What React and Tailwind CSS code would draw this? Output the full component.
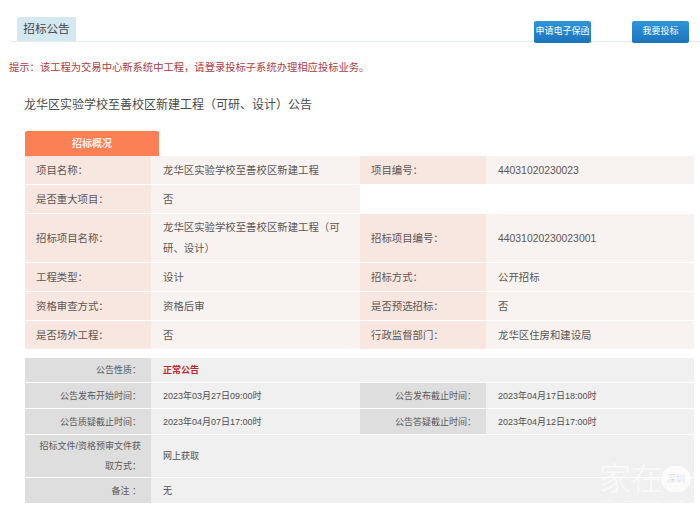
import React from 'react';

const font = { fontFamily: '"Liberation Sans", "Noto Sans CJK SC", sans-serif' };

function PinkLabel({ children, className = '' }) {
  return <div className={`flex items-center bg-[#f8e6e1] pl-[11px] text-[10.4px] leading-[21px] text-[#5c5653] ${className}`}>{children}</div>;
}

function PinkValue({ children, className = '' }) {
  return <div className={`flex items-center bg-[#f8f3f1] pl-3 pr-4 text-[10.4px] leading-[21px] text-[#5c5653] ${className}`}>{children}</div>;
}

function GreyLabel({ children }) {
  return <div className="flex items-center justify-end bg-[#dedede] pl-3 pr-[10px] text-right text-[9px] leading-[20px] text-[#595959]">{children}</div>;
}

function GreyValue({ children, className = '' }) {
  return <div className={`flex items-center bg-[#f0f0f0] pl-3 text-[9px] leading-[20px] text-[#4f4f4f] ${className}`}>{children}</div>;
}

function Button({ children }) {
  return (
    <div className="flex h-[22px] w-[57px] items-center justify-center rounded-[2px] bg-gradient-to-b from-[#2e95d9] to-[#1b74bd] text-[9px] text-white">
      {children}
    </div>
  );
}

export default function App() {
  return (
    <div className="relative h-[512px] w-[700px] overflow-hidden bg-white" style={font}>
      <div className="ml-[10px] flex h-[42px] items-end justify-between border-b border-[#e6edf1] pr-[11px]">
        <div className="ml-[7px] flex h-[24px] w-[59px] items-center justify-center rounded-t-[2px] bg-[#d4e8f2] text-[11.6px] text-[#444]">
          招标公告
        </div>
        <div className="mb-[-2px] flex gap-[41px]">
          <Button>申请电子保函</Button>
          <Button>我要投标</Button>
        </div>
      </div>

      <div className="mt-[20px] pl-[9px] text-[10.3px] leading-[12px] text-[#b03a42]">
        提示：该工程为交易中心新系统中工程，请登录投标子系统办理相应投标业务。
      </div>

      <div className="mt-[21px] pl-[24px] text-[12px] leading-[20px] text-[#4a4a4a]">
        龙华区实验学校至善校区新建工程（可研、设计）公告
      </div>

      <div className="mt-[16px] pl-[25px]">
        <div className="flex h-[25px] w-[134px] items-center justify-center rounded-t-[2px] bg-[#fb7f55] text-[10px] font-bold text-[#fdf0ea]">
          招标概况
        </div>

        <div className="grid w-[669px] grid-cols-[126px_209px_126px_208px] grid-rows-[28px_28px_48px_28px_28px_28px] gap-y-px">
          <PinkLabel>项目名称：</PinkLabel>
          <PinkValue>龙华区实验学校至善校区新建工程</PinkValue>
          <PinkLabel>项目编号：</PinkLabel>
          <PinkValue>44031020230023</PinkValue>

          <PinkLabel>是否重大项目：</PinkLabel>
          <PinkValue>否</PinkValue>
          <div className="col-span-2 bg-white" />

          <PinkLabel>招标项目名称：</PinkLabel>
          <PinkValue>龙华区实验学校至善校区新建工程（可研、设计）</PinkValue>
          <PinkLabel>招标项目编号：</PinkLabel>
          <PinkValue>44031020230023001</PinkValue>

          <PinkLabel>工程类型：</PinkLabel>
          <PinkValue>设计</PinkValue>
          <PinkLabel>招标方式：</PinkLabel>
          <PinkValue>公开招标</PinkValue>

          <PinkLabel>资格审查方式：</PinkLabel>
          <PinkValue>资格后审</PinkValue>
          <PinkLabel>是否预选招标：</PinkLabel>
          <PinkValue>否</PinkValue>

          <PinkLabel>是否场外工程：</PinkLabel>
          <PinkValue>否</PinkValue>
          <PinkLabel>行政监督部门：</PinkLabel>
          <PinkValue>龙华区住房和建设局</PinkValue>
        </div>

        <div className="mt-[9px] grid w-[669px] grid-cols-[126px_209px_126px_208px] grid-rows-[24px_25px_25px_42px_25px] gap-y-px">
          <GreyLabel>公告性质：</GreyLabel>
          <GreyValue className="col-span-3 font-bold text-[#b8282f]">正常公告</GreyValue>

          <GreyLabel>公告发布开始时间：</GreyLabel>
          <GreyValue>2023年03月27日09:00时</GreyValue>
          <GreyLabel>公告发布截止时间：</GreyLabel>
          <GreyValue>2023年04月17日18:00时</GreyValue>

          <GreyLabel>公告质疑截止时间：</GreyLabel>
          <GreyValue>2023年04月07日17:00时</GreyValue>
          <GreyLabel>公告答疑截止时间：</GreyLabel>
          <GreyValue>2023年04月12日17:00时</GreyValue>

          <GreyLabel>招标文件/资格预审文件获取方式：</GreyLabel>
          <GreyValue className="col-span-3">网上获取</GreyValue>

          <GreyLabel>备注 ：</GreyLabel>
          <GreyValue className="col-span-3">无</GreyValue>
        </div>
      </div>

      {/* forum watermark over the bottom right corner */}
      <div className="absolute left-[599px] top-[461px] flex items-center text-[32px] font-light leading-[36px] text-white/70">
        家在
        <span className="ml-[-2px] flex h-[26px] w-[30px] items-center justify-center rounded-full bg-white/75 text-[9px] text-[#d5d5d5]">
          深圳
        </span>
      </div>
      <div className="absolute left-[601px] top-[497px] text-[9px] tracking-[1.2px] text-white/60">bbs.szhome.com</div>
    </div>
  );
}
